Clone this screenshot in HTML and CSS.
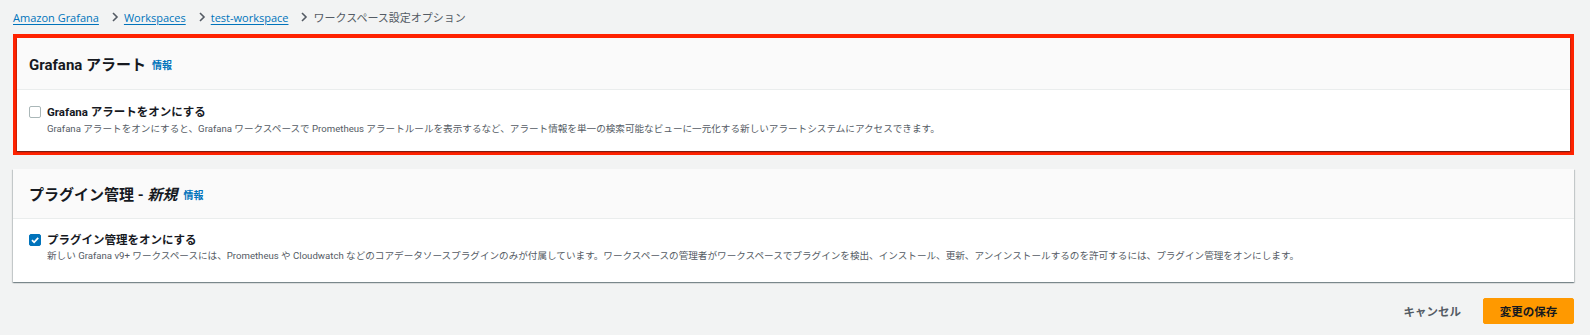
FILE: index.html
```html
<!DOCTYPE html>
<html lang="ja">
<head>
    <meta charset="UTF-8">
    <meta name="viewport" content="width=device-width, initial-scale=1.0">
    <title>ワークスペース設定オプション</title>
    <link rel="stylesheet" href="styles.css">
</head>
<body>
    <div class="page">
        <nav class="breadcrumbs">
            <a href="#">Amazon Grafana</a>
            <span class="chevron"><svg width="8" height="10" viewBox="0 0 8 10"><path d="M2 1l4 4-4 4" fill="none" stroke="#545b64" stroke-width="1.6"/></svg></span>
            <a href="#">Workspaces</a>
            <span class="chevron"><svg width="8" height="10" viewBox="0 0 8 10"><path d="M2 1l4 4-4 4" fill="none" stroke="#545b64" stroke-width="1.6"/></svg></span>
            <a href="#">test-workspace</a>
            <span class="chevron"><svg width="8" height="10" viewBox="0 0 8 10"><path d="M2 1l4 4-4 4" fill="none" stroke="#545b64" stroke-width="1.6"/></svg></span>
            <span class="current">ワークスペース設定オプション</span>
        </nav>

        <div class="highlight">
            <section class="panel">
                <div class="panel-header">
                    <h2>Grafana アラート</h2>
                    <a href="#" class="info">情報</a>
                </div>
                <div class="panel-body">
                    <label class="option">
                        <span class="box"></span>
                        <span class="option-text">
                            <span class="option-label">Grafana アラートをオンにする</span>
                            <span class="option-desc">Grafana アラートをオンにすると、Grafana ワークスペースで Prometheus アラートルールを表示するなど、アラート情報を単一の検索可能なビューに一元化する新しいアラートシステムにアクセスできます。</span>
                        </span>
                    </label>
                </div>
            </section>
        </div>

        <section class="panel panel-plain">
            <div class="panel-header">
                <h2>プラグイン管理 - <em>新規</em></h2>
                <a href="#" class="info">情報</a>
            </div>
            <div class="panel-body">
                <label class="option">
                    <span class="box checked"><svg width="10" height="10" viewBox="0 0 10 10"><path d="M2 5.2l2.1 2.1L8.2 2.8" fill="none" stroke="#fff" stroke-width="1.8"/></svg></span>
                    <span class="option-text">
                        <span class="option-label">プラグイン管理をオンにする</span>
                        <span class="option-desc">新しい Grafana v9+ ワークスペースには、Prometheus や Cloudwatch などのコアデータソースプラグインのみが付属しています。ワークスペースの管理者がワークスペースでプラグインを検出、インストール、更新、アンインストールするのを許可するには、プラグイン管理をオンにします。</span>
                    </span>
                </label>
            </div>
        </section>

        <div class="actions">
            <button class="btn-link">キャンセル</button>
            <button class="btn-primary">変更の保存</button>
        </div>
    </div>
</body>
</html>
```

FILE: styles.css
```css
body {
    margin: 0;
    background-color: #f2f3f3;
    color: #16191f;
    font-family: Roboto, "Noto Sans CJK JP", sans-serif;
}
.page {
    padding: 0 16px 0 13px;
}
.breadcrumbs {
    height: 34px;
    display: flex;
    align-items: center;
    gap: 10px;
}
.breadcrumbs a {
    font-family: "Open Sans", "Noto Sans CJK JP", sans-serif;
    font-size: 11px;
    color: #0073bb;
    text-decoration: underline;
    text-underline-offset: 2px;
}
.breadcrumbs .current {
    font-size: 11px;
    color: #545b64;
}
.chevron {
    display: flex;
    margin: 0 -5px 0 2px;
}
.highlight {
    border: 4px solid #ff2200;
    margin-bottom: 14px;
}
.panel {
    background-color: #fff;
    box-shadow: 0 1px 1px 0 rgba(0, 28, 36, 0.3), 1px 1px 1px 0 rgba(0, 28, 36, 0.15), -1px 1px 1px 0 rgba(0, 28, 36, 0.15);
}
.panel-header {
    height: 52px;
    box-sizing: border-box;
    padding: 0 12px;
    display: flex;
    align-items: center;
    gap: 6px;
    background-color: #fafafa;
    border-bottom: 1px solid #eaeded;
}
.panel-header h2 {
    margin: 0;
    font-size: 15px;
    font-weight: 700;
}
.panel-header em {
    font-style: italic;
}
.info {
    color: #0073bb;
    font-size: 10px;
    font-weight: 700;
    text-decoration: none;
    margin-top: 2px;
}
.panel-body {
    height: 61px;
    box-sizing: border-box;
    padding: 13px 12px 0;
}
.panel-plain .panel-header {
    height: 50px;
    padding: 0 16px;
}
.panel-plain .panel-body {
    height: 63px;
    padding: 12px 16px 0;
}
.option {
    display: flex;
    gap: 6px;
}
.box {
    width: 10px;
    height: 10px;
    margin-top: 3px;
    border: 1px solid #aab7b8;
    border-radius: 2px;
    background: #fff;
    display: flex;
    align-items: center;
    justify-content: center;
    flex-shrink: 0;
}
.box.checked {
    background-color: #0073bb;
    border-color: #0073bb;
}
.option-text {
    display: flex;
    flex-direction: column;
    gap: 2px;
}
.panel-plain .option-text {
    gap: 1px;
}
.option-label {
    font-size: 11.5px;
    font-weight: 700;
}
.option-desc {
    font-size: 9.6px;
    color: #545b64;
}
.actions {
    display: flex;
    justify-content: flex-end;
    align-items: center;
    gap: 22px;
    margin-top: 16px;
}
.actions button {
    font-family: inherit;
    font-size: 11.5px;
    font-weight: 700;
    cursor: pointer;
}
.btn-link {
    background: none;
    border: none;
    color: #545b64;
    padding: 0;
}
.btn-primary {
    width: 91px;
    height: 26px;
    background-color: #ff9900;
    border: 1px solid #ff9900;
    border-radius: 2px;
    color: #16191f;
}
```
